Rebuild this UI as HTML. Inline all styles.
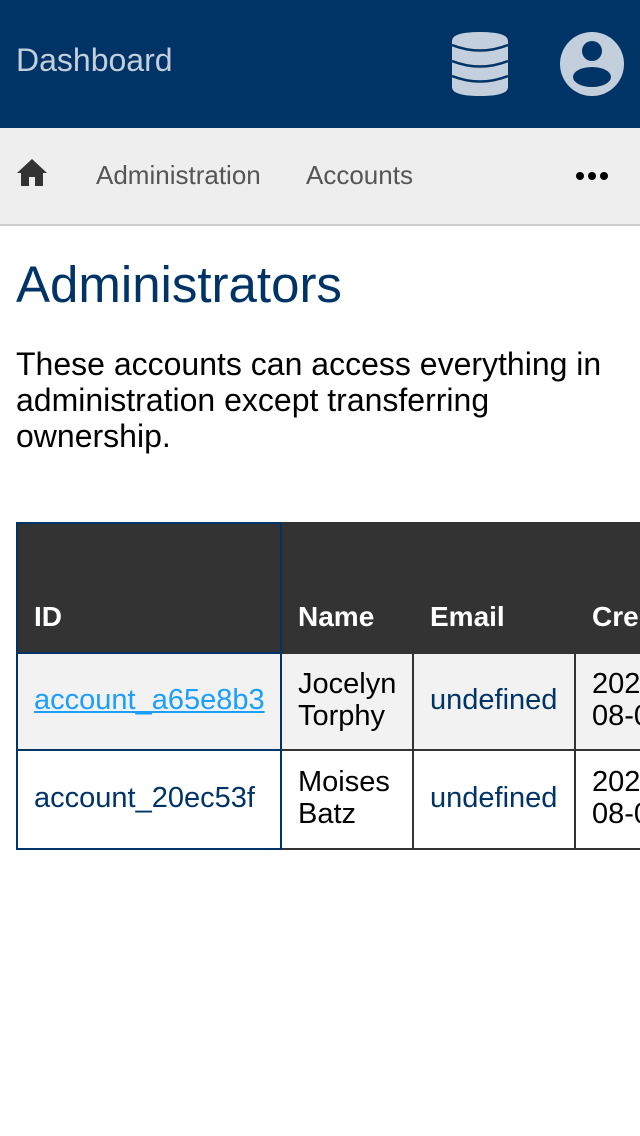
<!DOCTYPE html>
<html><head><meta charset="utf-8"><style>
*{margin:0;padding:0;box-sizing:border-box}
body{width:640px;height:1136px;overflow:hidden;background:#fff;font-family:"Liberation Sans",sans-serif;position:relative}
.a{position:absolute;white-space:nowrap}
</style></head><body>
<div class="a" style="left:0;top:0;width:640px;height:128px;background:#003366"></div>
<div class="a" style="left:16px;top:42px;font-size:32px;color:#c3cfdc">Dashboard</div>
<svg class="a" style="left:452px;top:32px" width="56" height="64" viewBox="0 0 56 64">
<path d="M0 9 Q0 0 28 0 Q56 0 56 9 V55 Q56 64 28 64 Q0 64 0 55Z" fill="#c3cfdc"/>
<g fill="none" stroke="#003366" stroke-width="2.5">
<path d="M0 13 Q28 24 56 13"/><path d="M0 29 Q28 40 56 29"/><path d="M0 44 Q28 55 56 44"/></g></svg>
<svg class="a" style="left:560px;top:32px" width="64" height="64" viewBox="0 0 64 64">
<circle cx="32" cy="32" r="32" fill="#c3cfdc"/><circle cx="32" cy="19" r="10" fill="#003366"/>
<ellipse cx="32" cy="45" rx="19" ry="10" fill="#003366"/></svg>
<div class="a" style="left:0;top:128px;width:640px;height:98px;background:#eee;border-bottom:2px solid #ccc"></div>
<svg class="a" style="left:16px;top:158px" width="32" height="28" viewBox="0 0 32 28"><path d="M16 1 L1 15 H5 V28 H13 V19 H19 V28 H27 V15 H31Z" fill="#333"/></svg>
<div class="a" style="left:96px;top:160px;font-size:26px;color:#555">Administration</div>
<div class="a" style="left:306px;top:160px;font-size:26px;color:#555">Accounts</div>
<div class="a" style="left:575px;top:169px;"><svg width="34" height="14"><circle cx="5" cy="7" r="4"/><circle cx="17" cy="7" r="4"/><circle cx="29" cy="7" r="4"/></svg></div>
<div class="a" style="left:16px;top:255px;font-size:51px;color:#003366">Administrators</div>
<div class="a" style="left:16px;top:346px;font-size:32px;line-height:36px;color:#000;white-space:normal;width:620px">These accounts can access everything in administration except transferring ownership.</div>
<div class="a" style="left:16px;top:522px;width:624px;height:131px;background:#333"></div>
<div class="a" style="left:16px;top:522px;width:266px;height:131px;border:2px solid #003366;border-bottom:none"></div>
<div class="a" style="left:34px;top:601px;font-size:28px;font-weight:bold;color:#fff">ID</div>
<div class="a" style="left:298px;top:601px;font-size:28px;font-weight:bold;color:#fff">Name</div>
<div class="a" style="left:430px;top:601px;font-size:28px;font-weight:bold;color:#fff">Email</div>
<div class="a" style="left:592px;top:601px;font-size:28px;font-weight:bold;color:#fff">Cre</div>
<div class="a" style="left:16px;top:652px;width:624px;height:99px;background:#f2f2f2;border-top:2px solid #333;border-bottom:2px solid #333"></div>
<div class="a" style="left:16px;top:749px;width:624px;height:101px;border-bottom:2px solid #333"></div>
<div class="a" style="left:16px;top:652px;width:266px;height:198px;border:2px solid #003366"></div>
<div class="a" style="left:16px;top:749px;width:266px;height:2px;background:#003366"></div>
<div class="a" style="left:412px;top:653px;width:2px;height:197px;background:#333"></div>
<div class="a" style="left:574px;top:653px;width:2px;height:197px;background:#333"></div>
<div class="a" style="left:34px;top:684px;font-size:29px;color:#1a9fff;text-decoration:underline">account_a65e8b3</div>
<div class="a" style="left:34px;top:782px;font-size:29px;color:#003366">account_20ec53f</div>
<div class="a" style="left:298px;top:668px;font-size:29px;line-height:32px;color:#000">Jocelyn<br>Torphy</div>
<div class="a" style="left:298px;top:766px;font-size:29px;line-height:32px;color:#000">Moises<br>Batz</div>
<div class="a" style="left:430px;top:684px;font-size:29px;color:#003366">undefined</div>
<div class="a" style="left:430px;top:782px;font-size:29px;color:#003366">undefined</div>
<div class="a" style="left:592px;top:668px;font-size:29px;line-height:32px;color:#000">202<br>08-0</div>
<div class="a" style="left:592px;top:766px;font-size:29px;line-height:32px;color:#000">202<br>08-0</div>
</body></html>
